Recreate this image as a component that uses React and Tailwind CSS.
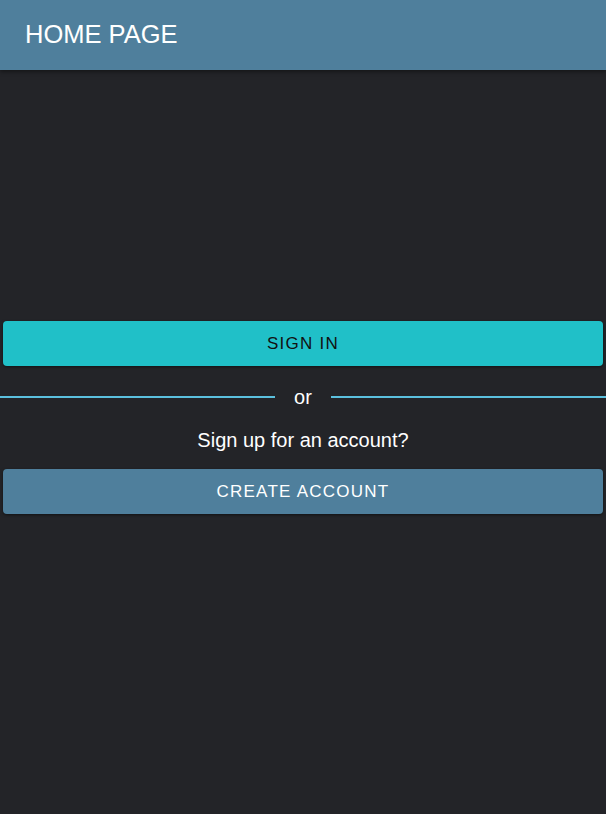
export default function App() {
  return (
    <div className="min-h-[814px] bg-[#232428] font-['Liberation_Sans',Arial,sans-serif]">
      {/* Header */}
      <header className="h-[70px] bg-[#4f7f9c] flex items-center px-[25px] shadow-[0_2px_4px_rgba(0,0,0,0.4)]">
        <h1 className="text-white text-[25.5px] leading-none">HOME PAGE</h1>
      </header>

      {/* Auth options */}
      <main className="pt-[251px] flex flex-col">
        <button className="mx-[3px] h-[45px] rounded-[4px] bg-[#20c0c8] text-[#111] text-[17px] tracking-[1.25px] shadow-[0_1px_3px_rgba(0,0,0,0.5)]">
          SIGN IN
        </button>

        <div className="mt-[20px] h-[22px] flex items-center">
          <div className="flex-1 h-[2px] bg-[#5bc0de]" />
          <span className="px-[19px] text-white text-[20px] leading-[22px]">or</span>
          <div className="flex-1 h-[2px] bg-[#5bc0de]" />
        </div>

        <p className="mt-[21px] text-center text-white text-[20px] leading-[22px]">
          Sign up for an account?
        </p>

        <button className="mt-[18px] mx-[3px] h-[45px] rounded-[4px] bg-[#4f7f9c] text-white text-[17px] tracking-[1.25px] shadow-[0_1px_3px_rgba(0,0,0,0.5)]">
          CREATE ACCOUNT
        </button>
      </main>
    </div>
  );
}
